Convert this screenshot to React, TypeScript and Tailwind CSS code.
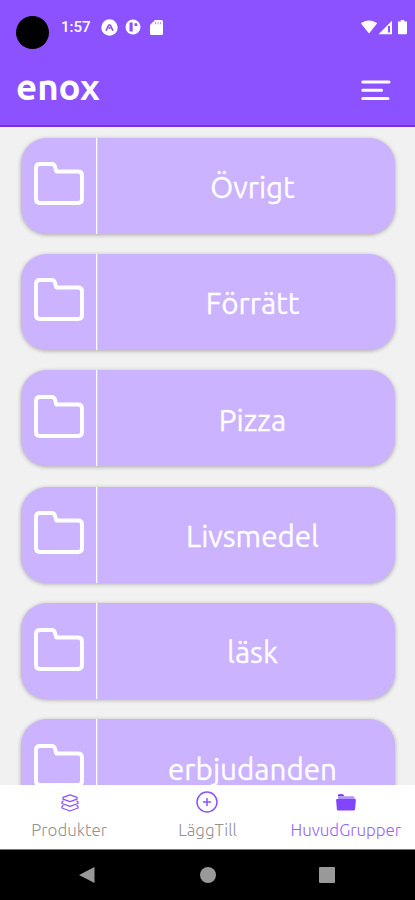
import clsx from "clsx"

const groups = [
  "Övrigt",
  "Förrätt",
  "Pizza",
  "Livsmedel",
  "läsk",
  "erbjudanden",
]

function StatusBar() {
  return (
    <div className="flex h-[54px] items-center pl-4 text-white">
      <div className="mt-2.5 size-[33px] rounded-full bg-black" />
      <span className="ml-3 font-['Roboto',sans-serif] text-[15px] font-medium">
        1:57
      </span>
      <svg className="ml-2.5" width="17" height="17" viewBox="0 0 17 17">
        <circle cx="8.5" cy="8.5" r="8.2" fill="#fff" />
        <path
          d="M4.9 11.6c1.8-2 1.8-5.8 3.6-5.8s1.8 3.8 3.6 5.8M8.5 8v2"
          fill="none"
          stroke="#8c52ff"
          strokeWidth="1.7"
        />
      </svg>
      <svg className="ml-[7px]" width="16" height="16" viewBox="0 0 16 16">
        <circle cx="8" cy="8" r="7.5" fill="#fff" />
        <path d="M4.5 3.6h3.2v8.8H4.5zM9.5 4.2h2.8V7H9.5z" fill="#8c52ff" />
      </svg>
      <svg className="ml-[9px]" width="13" height="15" viewBox="0 0 13 15">
        <path
          d="M5 0h6.5Q13 0 13 1.5v12q0 1.5-1.5 1.5h-10Q0 15 0 13.5V5z"
          fill="#fff"
        />
        <path
          d="M5.5 2v2.3M8 2v2.3M10.5 2v2.3"
          stroke="#8c52ff"
          strokeOpacity="0.6"
        />
      </svg>
      <svg
        className="mr-[7px] ml-auto"
        width="47"
        height="15"
        viewBox="0 0 47 15"
        fill="#fff"
      >
        <path d="M0 3.5Q0 3 1 2.5q7-4 14 0 1 .5 1 1L8 13.5z" />
        <path fillRule="evenodd" d="M17.5 14.2 31 .7v13.5zM27 6v6.5h2V6z" />
        <path d="M39.8 0h3.5v1.5H46v11.7q0 1-1 1h-7q-1 0-1-1V1.5h2.8z" />
      </svg>
    </div>
  )
}

function GroupCard({ title }: Readonly<{ title: string }>) {
  return (
    <div className="flex h-24 shrink-0 overflow-hidden rounded-[26px] bg-[#ccb3ff] shadow-[0_1px_4px_rgba(0,0,0,0.3)]">
      <div className="flex w-[76px] items-center justify-center border-r border-white pb-1">
        <svg
          width="50"
          height="43"
          viewBox="0 0 50 43"
          fill="none"
          stroke="#fff"
          strokeWidth="3.9"
          strokeLinejoin="round"
        >
          <path d="M6 2h11.5Q20.2 2 21 4.8L22.3 9.5H44Q48 9.5 48 13.5V37Q48 41 44 41H6Q2 41 2 37V6Q2 2 6 2Z" />
        </svg>
      </div>
      <div className="flex flex-1 items-center justify-center border-l border-white/30 pt-[3px] pl-3 text-[29.6px] text-white [-webkit-text-stroke:0.3px_white]">
        {title}
      </div>
    </div>
  )
}

function Tab({
  title,
  active,
  children,
}: Readonly<{
  title: string
  active?: boolean
  children: React.ReactNode
}>) {
  return (
    <div className="flex flex-1 flex-col items-center text-[#8c52ff]">
      <div className="flex h-[34px] items-center">{children}</div>
      <span
        className={clsx(
          "pt-px text-[16.9px] leading-5 font-light",
          active ? "text-[#9763ff]" : "text-[#929292]",
        )}
      >
        {title}
      </span>
    </div>
  )
}

export default function App() {
  return (
    <div className="flex h-[900px] w-[415px] flex-col overflow-hidden bg-[#f1f1f1] font-['Ubuntu','Noto_Sans',sans-serif]">
      <header className="h-[127px] shrink-0 border-b-2 border-[#792fe3] bg-[#8c52ff]">
        <StatusBar />
        <div className="flex h-[70px] items-center justify-between pr-6 pl-4 text-white">
          <span className="pb-1 text-[36.7px] leading-none font-bold">
            enox
          </span>
          <svg
            className="mt-[3px]"
            width="30"
            height="21"
            viewBox="0 0 30 21"
            stroke="#fff"
            strokeWidth="3"
            strokeLinecap="round"
          >
            <path d="M1.8 2H28M1.8 10.3H20.5M1.8 18.5H27" />
          </svg>
        </div>
      </header>

      <main className="flex min-h-0 flex-1 flex-col gap-[20.4px] overflow-hidden pt-[10.5px] pr-5 pl-[21px]">
        {groups.map((title) => (
          <GroupCard key={title} title={title} />
        ))}
      </main>

      <nav className="flex h-[65px] shrink-0 border-b border-[#777] bg-white">
        <Tab title="Produkter">
          <svg
            className="mt-px ml-px"
            width="18"
            height="18"
            viewBox="0 0 18 18"
            fill="none"
            stroke="currentColor"
            strokeWidth="1.3"
            strokeLinejoin="round"
          >
            <path d="M9 .8 16 3.3v1.9L9 7.6 2 5.2V3.3z" />
            <path d="M2.5 6.8 1 8v1.5L9 12.300l8-2.800V8l-1.5-1.200M2.5 11.300 1 12.500V14l8 3 8-3v-1.500l-1.5-1.200" />
          </svg>
        </Tab>
        <Tab title="LäggTill">
          <svg
            width="22"
            height="22"
            viewBox="0 0 22 22"
            fill="none"
            stroke="currentColor"
            strokeWidth="1.5"
            strokeLinecap="round"
          >
            <circle cx="11" cy="11" r="10" />
            <path d="M11 7.5v7M7.5 11h7" />
          </svg>
        </Tab>
        <Tab title="HuvudGrupper" active>
          <svg className="mt-px" width="20" height="17" viewBox="0 0 20 17">
            <path d="M2 1q0-.8 1-.8h4l1.5 2H2z" fill="#792fe3" />
            <path d="M2 2.2h15q1.5 0 1.5 1.5V6H2z" fill="#b394ff" />
            <path
              d="M1 5h18q1 0 .9 1L19 15.5q-.1 1-1 1H2q-1 0-1.1-1L.1 6q-.1-1 .9-1z"
              fill="#8145fb"
            />
          </svg>
        </Tab>
      </nav>

      <div className="flex h-[50px] shrink-0 items-center justify-around bg-black pr-[29px] pl-[27px]">
        <svg className="mr-0.5" width="18" height="18" viewBox="0 0 18 18">
          <path d="M1 9 16.5 1v16z" fill="#999" />
        </svg>
        <div className="size-4 rounded-full bg-[#999]" />
        <div className="size-4 rounded-[1px] bg-[#999]" />
      </div>
    </div>
  )
}
